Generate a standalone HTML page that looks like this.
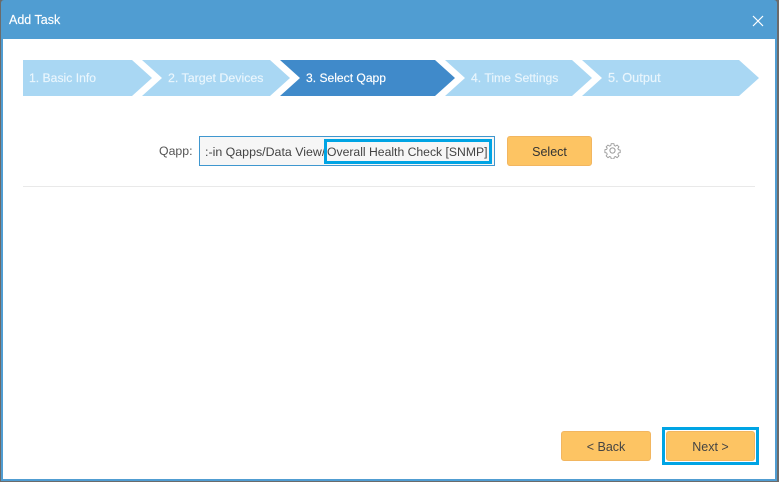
<!DOCTYPE html>
<html><head><meta charset="utf-8">
<style>
html,body{margin:0;padding:0;width:779px;height:482px;overflow:hidden;background:#6b6b6b}
body{position:relative;font-family:"Liberation Sans",sans-serif;font-size:12.2px;color:#444}
div{position:absolute;box-sizing:border-box;white-space:nowrap}
.s{font-size:12.2px;top:70px;line-height:16px;color:#eaf6fd;-webkit-text-stroke:.15px currentColor}
</style></head><body>
<div style="left:1px;top:0;width:776px;height:481px;background:#509dd2;border-radius:3px 3px 0 0"></div>
<div style="left:3px;top:39px;width:772px;height:440px;background:#fff"></div>
<div style="left:9px;top:12px;height:16px;line-height:16px;color:#fff;font-size:12.5px;-webkit-text-stroke:.15px #fff">Add Task</div>
<svg style="position:absolute;left:752px;top:15px" width="12" height="12" viewBox="0 0 12 12"><path d="M1 1L11 11M11 1L1 11" stroke="#fff" stroke-width="1.2" fill="none"/></svg>
<svg style="position:absolute;left:0;top:0" width="779" height="120">
<polygon points="23,60 132,60 152,78 132,96 23,96" fill="#a9d7f3"/>
<polygon points="142,60 270,60 290,78 270,96 142,96 162,78" fill="#a9d7f3"/>
<polygon points="280,60 435,60 455,78 435,96 280,96 300,78" fill="#408aca"/>
<polygon points="445,60 572,60 592,78 572,96 445,96 465,78" fill="#a9d7f3"/>
<polygon points="582,60 739,60 759,78 739,96 582,96 602,78" fill="#a9d7f3"/>
</svg>
<div class="s" style="left:29px">1. Basic Info</div>
<div class="s" style="left:168px;font-size:12.4px">2. Target Devices</div>
<div class="s" style="left:306px;font-size:12.1px;color:#fff">3. Select Qapp</div>
<div class="s" style="left:471px;font-size:12.2px">4. Time Settings</div>
<div class="s" style="left:608px;font-size:12.8px">5. Output</div>
<div style="left:159px;top:143px;line-height:16px;color:#555;font-size:12.3px">Qapp:</div>
<div style="left:199px;top:136px;width:296px;height:30px;background:#f6f6f6;border:1px solid #3f97cf"></div>
<div style="left:205px;top:144px;width:121px;overflow:hidden;line-height:16px;color:#444;font-size:12.4px">:-in Qapps/Data View/</div>
<div style="left:324px;top:139px;width:168px;height:25px;border:3px solid #00a4e4"></div>
<div style="left:327px;top:144px;line-height:16px;color:#444;font-size:12.2px">Overall Health Check [SNMP]</div>
<div style="left:507px;top:136px;width:85px;height:30px;background:#fdc463;border:1px solid #f2b660;border-radius:3px;text-align:center;line-height:30px;color:#333;font-size:12.5px">Select</div>
<svg style="position:absolute;left:604px;top:142px" width="17" height="17" viewBox="0 0 17 17"><path d="M7 1h3l.4 2.100 1.400.6 1.800-1.200 2 2-1.200 1.800.6 1.400 2 .4v2.800l-2 .4-.6 1.400 1.200 1.800-2 2-1.800-1.200-1.400.6-.4 2H7l-.4-2-1.400-.6-1.800 1.200-2-2 1.200-1.800-.6-1.400-2-.4V7.700l2-.4.6-1.400L1.400 4.500l2-2 1.800 1.200 1.400-.6z" transform="translate(.9 .8) scale(.9)" fill="none" stroke="#9a9a9a" stroke-width="1"/><circle cx="8.500" cy="8.500" r="2.600" fill="none" stroke="#9a9a9a"/></svg>
<div style="left:23px;top:186px;width:732px;height:1px;background:#e9e9e9"></div>
<div style="left:561px;top:431px;width:90px;height:30px;background:#fdc463;border:1px solid #f2b660;border-radius:3px;text-align:center;line-height:30px;color:#444;font-size:12.5px">&lt; Back</div>
<div style="left:662px;top:427px;width:97px;height:38px;border:3px solid #00a4e4"></div>
<div style="left:666px;top:431px;width:89px;height:30px;background:#fdc463;border:1px solid #f2b660;border-radius:3px;text-align:center;line-height:30px;color:#444;font-size:12.5px">Next &gt;</div>
</body></html>
